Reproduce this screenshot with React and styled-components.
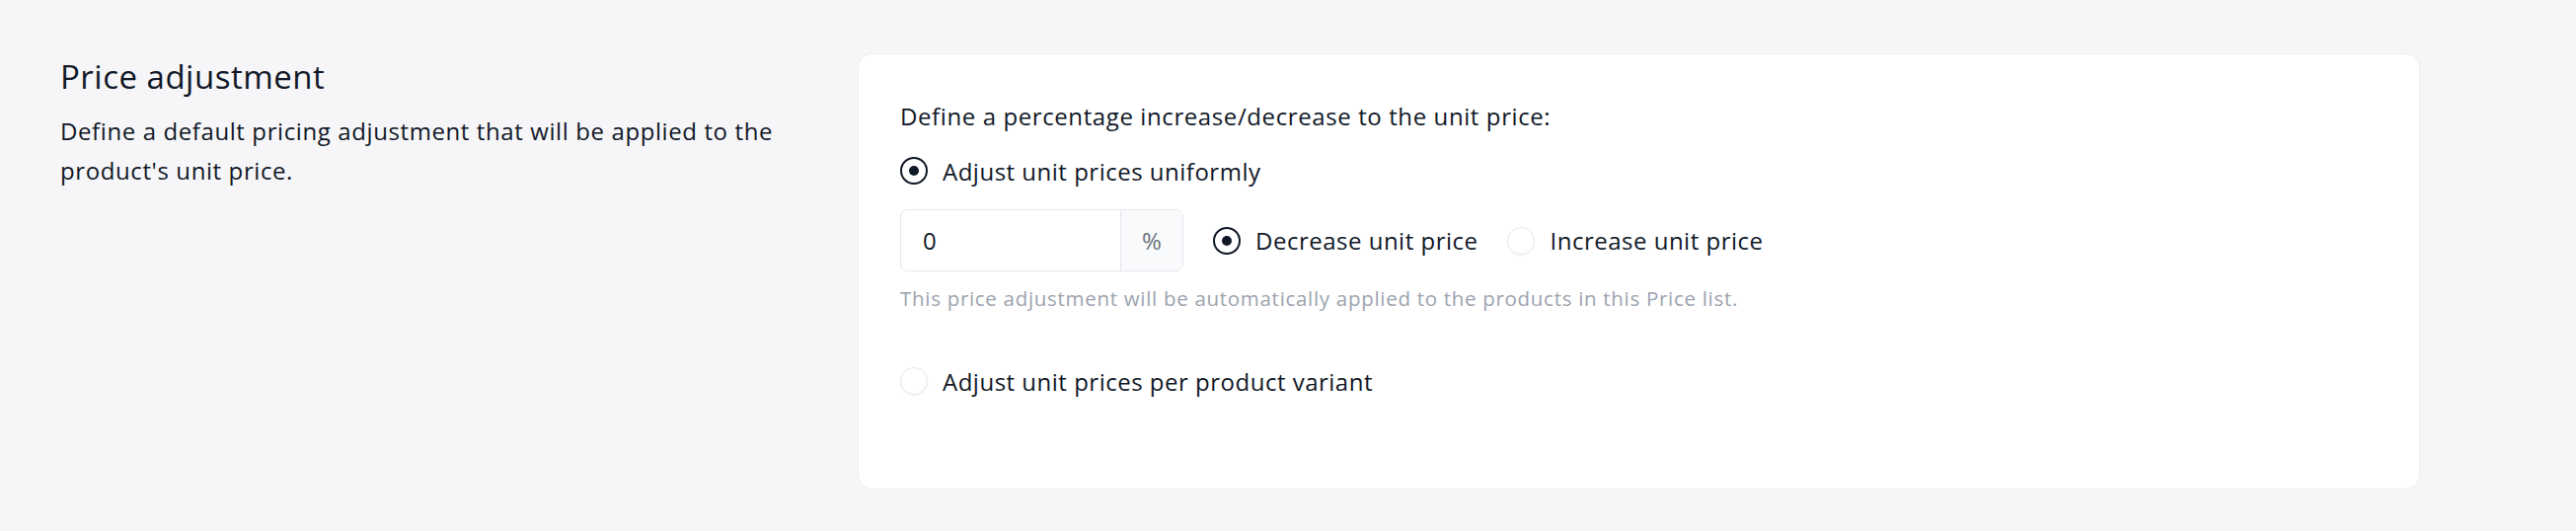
import React, { useState } from "react";
import styled, { createGlobalStyle } from "styled-components";

const GlobalStyle = createGlobalStyle`
  html, body {
    margin: 0;
    padding: 0;
    background-color: #f6f6f8;
  }
  body {
    font-family: "Open Sans", Lato, sans-serif;
    color: #111827;
    -webkit-font-smoothing: antialiased;
  }
`;

const Page = styled.div`
  display: flex;
  align-items: flex-start;
  min-height: 538px;
  box-sizing: border-box;
  padding: 55px 0 0 61px;
`;

const Intro = styled.div`
  width: 809px;
  flex-shrink: 0;
  box-sizing: border-box;
  padding-right: 30px;
  padding-top: 3px;
`;

const Title = styled.h2`
  margin: 0 0 15px;
  font-size: 33px;
  line-height: 40px;
  font-weight: 500;
  letter-spacing: 0.5px;
`;

const Lead = styled.p`
  margin: 0;
  font-size: 24px;
  line-height: 40px;
  letter-spacing: 0.6px;
`;

const Card = styled.div`
  width: 1581px;
  height: 440px;
  box-sizing: border-box;
  background: #fff;
  border-radius: 14px;
  box-shadow: 0 0 0 1px rgba(229, 231, 235, 0.5);
  padding: 43px 42px;
  display: flex;
  flex-direction: column;
`;

const Question = styled.div`
  font-size: 24px;
  line-height: 40px;
  letter-spacing: 0.6px;
  margin-bottom: 15px;
`;

const Option = styled.label`
  display: flex;
  align-items: center;
  gap: 15px;
  height: 40px;
  font-size: 24px;
  letter-spacing: 0.5px;
  cursor: pointer;
  margin-top: ${(p) => p.$top || 0}px;
`;

const Dot = styled.span`
  width: 28px;
  height: 28px;
  box-sizing: border-box;
  border-radius: 50%;
  flex-shrink: 0;
  display: flex;
  align-items: center;
  justify-content: center;
  border: ${(p) => (p.$on ? "2px solid #111827" : "1.5px solid #e5e7eb")};
  box-shadow: ${(p) => (p.$on ? "none" : "0 1px 2px rgba(0,0,0,0.05)")};
  &::after {
    content: "";
    width: 10px;
    height: 10px;
    border-radius: 50%;
    background: #111827;
    display: ${(p) => (p.$on ? "block" : "none")};
  }
`;

const Row = styled.div`
  display: flex;
  align-items: center;
  gap: 30px;
  margin-top: 19px;
`;

const Field = styled.div`
  display: flex;
  width: 287px;
  height: 63px;
  box-sizing: border-box;
  border: 1.5px solid #e5e7eb;
  border-radius: 7px;
  overflow: hidden;
  background: #fff;
`;

const Input = styled.input`
  flex: 1;
  min-width: 0;
  border: 0;
  outline: none;
  padding: 0 22px;
  font-family: inherit;
  font-size: 24px;
  color: #111827;
  background: transparent;
`;

const Suffix = styled.span`
  width: 62px;
  flex-shrink: 0;
  display: flex;
  align-items: center;
  justify-content: center;
  border-left: 1.5px solid #e5e7eb;
  background: #f9fafb;
  color: #6b7280;
  font-size: 24px;
`;

const Hint = styled.p`
  margin: 14px 0 0;
  font-size: 20.5px;
  line-height: 27px;
  letter-spacing: 0.7px;
  color: #9ca3af;
`;

const Radio = ({ on, children, top, onClick }) => (
  <Option $top={top} onClick={onClick}>
    <Dot $on={on} />
    {children}
  </Option>
);

export default function App() {
  const [mode, setMode] = useState("uniform");
  const [dir, setDir] = useState("decrease");
  const [value, setValue] = useState("0");

  return (
    <>
      <GlobalStyle />
      <Page>
        <Intro>
          <Title>Price adjustment</Title>
          <Lead>
            Define a default pricing adjustment that will be applied to the
            product's unit price.
          </Lead>
        </Intro>
        <Card>
          <Question>Define a percentage increase/decrease to the unit price:</Question>
          <Radio on={mode === "uniform"} onClick={() => setMode("uniform")}>
            Adjust unit prices uniformly
          </Radio>
          <Row>
            <Field>
              <Input value={value} onChange={(e) => setValue(e.target.value)} />
              <Suffix>%</Suffix>
            </Field>
            <Radio on={dir === "decrease"} onClick={() => setDir("decrease")}>
              Decrease unit price
            </Radio>
            <Radio on={dir === "increase"} onClick={() => setDir("increase")}>
              Increase unit price
            </Radio>
          </Row>
          <Hint>
            This price adjustment will be automatically applied to the products
            in this Price list.
          </Hint>
          <Radio top={50} on={mode === "variant"} onClick={() => setMode("variant")}>
            Adjust unit prices per product variant
          </Radio>
        </Card>
      </Page>
    </>
  );
}
